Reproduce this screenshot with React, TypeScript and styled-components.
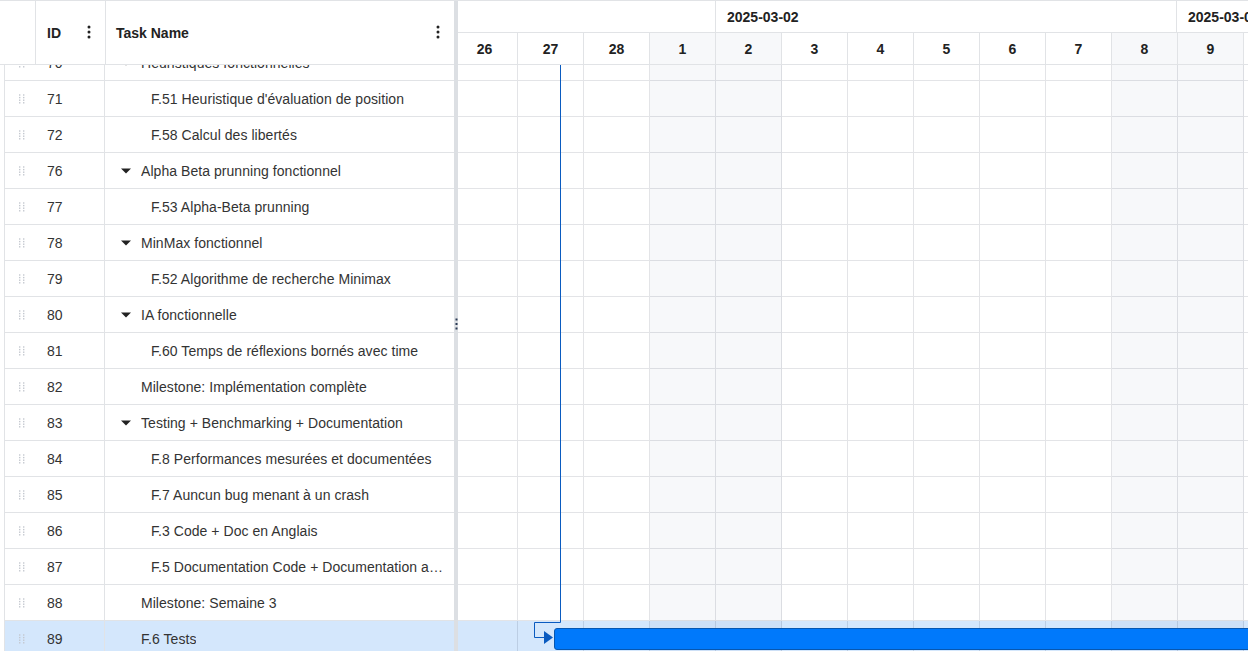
import React from "react";
import styled, { createGlobalStyle, css } from "styled-components";

const GlobalStyle = createGlobalStyle`
  html, body { margin: 0; padding: 0; background: #fff; }
  body { font-family: "Liberation Sans", Arial, sans-serif; font-size: 14px; color: #333; }
  * { box-sizing: border-box; }
`;

const LINE = "#e1e3e6";
const ROW_H = 36;
const COL_W = 66;

type Task = { id: number; name: string; kind: "parent" | "child" | "leaf"; selected?: boolean };

const tasks: Task[] = [
  { id: 70, name: "Heuristiques fonctionnelles", kind: "parent" },
  { id: 71, name: "F.51 Heuristique d'évaluation de position", kind: "child" },
  { id: 72, name: "F.58 Calcul des libertés", kind: "child" },
  { id: 76, name: "Alpha Beta prunning fonctionnel", kind: "parent" },
  { id: 77, name: "F.53 Alpha-Beta prunning", kind: "child" },
  { id: 78, name: "MinMax fonctionnel", kind: "parent" },
  { id: 79, name: "F.52 Algorithme de recherche Minimax", kind: "child" },
  { id: 80, name: "IA fonctionnelle", kind: "parent" },
  { id: 81, name: "F.60 Temps de réflexions bornés avec time", kind: "child" },
  { id: 82, name: "Milestone: Implémentation complète", kind: "leaf" },
  { id: 83, name: "Testing + Benchmarking + Documentation", kind: "parent" },
  { id: 84, name: "F.8 Performances mesurées et documentées", kind: "child" },
  { id: 85, name: "F.7 Auncun bug menant à un crash", kind: "child" },
  { id: 86, name: "F.3 Code + Doc en Anglais", kind: "child" },
  { id: 87, name: "F.5 Documentation Code + Documentation architecture", kind: "child" },
  { id: 88, name: "Milestone: Semaine 3", kind: "leaf" },
  { id: 89, name: "F.6 Tests", kind: "leaf", selected: true },
];

const days = [
  { d: 26, we: false },
  { d: 27, we: false },
  { d: 28, we: false },
  { d: 1, we: true },
  { d: 2, we: true },
  { d: 3, we: false },
  { d: 4, we: false },
  { d: 5, we: false },
  { d: 6, we: false },
  { d: 7, we: false },
  { d: 8, we: true },
  { d: 9, we: true },
  { d: 10, we: false },
];

const weeks = [
  { label: "", span: 4 },
  { label: "2025-03-02", span: 7 },
  { label: "2025-03-09", span: 7 },
];

/* ---------- layout ---------- */

const Gantt = styled.div`
  display: flex;
  width: 1248px;
  height: 651px;
  overflow: hidden;
  border-top: 1px solid ${LINE};
`;

const GridPanel = styled.div`
  width: 454px;
  flex: none;
  display: flex;
  flex-direction: column;
  overflow: hidden;
`;

const Splitter = styled.div`
  width: 4px;
  flex: none;
  background: #dcdfe3;
  display: flex;
  align-items: center;
  justify-content: center;
  padding-bottom: 4px;
`;

const ChartPanel = styled.div`
  flex: 1;
  min-width: 0;
  display: flex;
  flex-direction: column;
  overflow: hidden;
`;

/* ---------- grid header ---------- */

const GridHeader = styled.div`
  height: 64px;
  flex: none;
  display: flex;
  border-bottom: 1px solid ${LINE};
`;

const HeadCell = styled.div<{ $w?: number; $divider?: boolean; $pad?: number }>`
  ${(p) => (p.$w ? css`width: ${p.$w}px; flex: none;` : css`flex: 1; min-width: 0;`)}
  display: flex;
  align-items: center;
  justify-content: space-between;
  padding: 0 10px 0 ${(p) => p.$pad ?? 11}px;
  font-weight: bold;
  font-size: 14px;
  color: #222;
  ${(p) => p.$divider && css`border-right: 1px solid ${LINE};`}
`;

const MenuButton = styled.span`
  display: flex;
  width: 12px;
  justify-content: center;
  color: #222;
  margin-top: -2px;
`;

/* ---------- grid body ---------- */

const Viewport = styled.div`
  flex: 1;
  overflow: hidden;
`;

const GridRows = styled.div`
  margin: -20px 0 0 4px;
  border-left: 1px solid ${LINE};
`;

const GridRow = styled.div<{ $selected?: boolean }>`
  height: ${ROW_H}px;
  display: flex;
  align-items: stretch;
  border-bottom: 1px solid ${LINE};
  background: ${(p) => (p.$selected ? "#d4e7fc" : "#fff")};
`;

const DragCell = styled.div`
  width: 30px;
  flex: none;
  display: flex;
  align-items: center;
  padding-left: 14px;
`;

const IdCell = styled.div`
  width: 70px;
  flex: none;
  display: flex;
  align-items: center;
  padding-left: 12px;
  border-right: 1px solid ${LINE};
`;

const NameCell = styled.div<{ $indent: number }>`
  flex: 1;
  min-width: 0;
  display: flex;
  align-items: center;
  padding: 0 10px 0 ${(p) => p.$indent}px;
`;

const Toggle = styled.span`
  width: 25px;
  flex: none;
  display: flex;
  align-items: center;
  padding-left: 5px;
`;

const NameText = styled.span`
  white-space: nowrap;
  overflow: hidden;
  text-overflow: ellipsis;
  letter-spacing: 0.05px;
`;

/* ---------- chart header ---------- */

const ChartHeader = styled.div`
  height: 64px;
  flex: none;
  overflow: hidden;
`;

const TierRow = styled.div`
  display: flex;
  height: 32px;
  margin-left: -6px;
  border-bottom: 1px solid ${LINE};
`;

const WeekCell = styled.div<{ $span: number; $first?: boolean }>`
  width: ${(p) => p.$span * COL_W}px;
  flex: none;
  display: flex;
  align-items: center;
  padding-left: 11px;
  font-weight: bold;
  color: #222;
  ${(p) => !p.$first && css`border-left: 1px solid ${LINE};`}
  margin-left: ${(p) => (p.$first ? 0 : -1)}px;
`;

const DayCell = styled.div<{ $we: boolean }>`
  width: ${COL_W}px;
  flex: none;
  display: flex;
  align-items: center;
  justify-content: center;
  font-weight: bold;
  color: #222;
  border-right: 1px solid ${LINE};
  background: ${(p) => (p.$we ? "#f7f8fa" : "transparent")};
`;

/* ---------- chart body ---------- */

const ChartRows = styled.div`
  position: relative;
  margin: -20px 0 0 -6px;
`;

const ChartRow = styled.div<{ $selected?: boolean }>`
  height: ${ROW_H}px;
  display: flex;
  background: ${(p) => (p.$selected ? "#d4e7fc" : "#fff")};
`;

const ChartCell = styled.div<{ $we: boolean }>`
  width: ${COL_W}px;
  flex: none;
  border-right: 1px solid rgba(0, 10, 40, 0.11);
  border-bottom: 1px solid rgba(0, 10, 40, 0.11);
  background: ${(p) => (p.$we ? "rgba(55, 80, 130, 0.04)" : "transparent")};
`;

const LinkLayer = styled.svg`
  position: absolute;
  left: 0;
  top: 0;
  overflow: visible;
  pointer-events: none;
`;

const TaskBar = styled.div`
  position: absolute;
  left: 102px;
  top: 583px;
  width: 900px;
  height: 22px;
  background: #0079fb;
  border: 1px solid #0757b0;
  border-radius: 3px;
`;

/* ---------- icons ---------- */

const Kebab = ({ color = "#222" }: { color?: string }) => (
  <svg width="4" height="14" viewBox="0 0 4 14">
    <circle cx="2" cy="2" r="1.5" fill={color} />
    <circle cx="2" cy="7" r="1.5" fill={color} />
    <circle cx="2" cy="12" r="1.5" fill={color} />
  </svg>
);

const SplitKebab = () => (
  <svg width="3" height="12" viewBox="0 0 3 12">
    <rect x="0.5" y="0.5" width="2" height="2" fill="#2a3a55" />
    <rect x="0.5" y="5" width="2" height="2" fill="#2a3a55" />
    <rect x="0.5" y="9.5" width="2" height="2" fill="#2a3a55" />
  </svg>
);

const DragDots = () => (
  <svg width="6" height="10" viewBox="0 0 6 10">
    {[0, 1].map((c) =>
      [0, 1, 2, 3].map((r) => (
        <rect key={`${c}-${r}`} x={c * 4} y={r * 2.6 + 0.3} width="1.4" height="1.4" fill="#c4c8cf" />
      ))
    )}
  </svg>
);

const Caret = () => (
  <svg width="10" height="6" viewBox="0 0 10 6">
    <path d="M0 0.5 L10 0.5 L5 5.5 Z" fill="#222" />
  </svg>
);

export default function App() {
  return (
    <>
      <GlobalStyle />
      <Gantt>
        <GridPanel>
          <GridHeader>
            <HeadCell $w={36} $divider />
            <HeadCell $w={70} $divider>
              ID
              <MenuButton>
                <Kebab />
              </MenuButton>
            </HeadCell>
            <HeadCell $pad={10}>
              Task Name
              <MenuButton>
                <Kebab />
              </MenuButton>
            </HeadCell>
          </GridHeader>
          <Viewport>
            <GridRows>
              {tasks.map((t) => (
                <GridRow key={t.id} $selected={t.selected}>
                  <DragCell>
                    <DragDots />
                  </DragCell>
                  <IdCell>{t.id}</IdCell>
                  <NameCell $indent={t.kind === "child" ? 46 : 11}>
                    {t.kind === "parent" && (
                      <Toggle>
                        <Caret />
                      </Toggle>
                    )}
                    {t.kind === "leaf" && <Toggle />}
                    <NameText>{t.name}</NameText>
                  </NameCell>
                </GridRow>
              ))}
            </GridRows>
          </Viewport>
        </GridPanel>
        <Splitter>
          <SplitKebab />
        </Splitter>
        <ChartPanel>
          <ChartHeader>
            <TierRow>
              {weeks.map((w, i) => (
                <WeekCell key={i} $span={w.span} $first={i === 0}>
                  {w.label}
                </WeekCell>
              ))}
            </TierRow>
            <TierRow>
              {days.map((d, i) => (
                <DayCell key={i} $we={d.we}>
                  {d.d}
                </DayCell>
              ))}
            </TierRow>
          </ChartHeader>
          <Viewport>
            <ChartRows>
              {tasks.map((t) => (
                <ChartRow key={t.id} $selected={t.selected}>
                  {days.map((d, i) => (
                    <ChartCell key={i} $we={d.we} />
                  ))}
                </ChartRow>
              ))}
              <LinkLayer width="1" height="1">
                <polyline
                  points="108.5,0 108.5,577.5 82.5,577.5 82.5,592.5 93,592.5"
                  fill="none"
                  stroke="#0a5bc0"
                  strokeWidth="1"
                />
                <path d="M92 586 L101 592.5 L92 599 Z" fill="#0a5bc0" />
              </LinkLayer>
              <TaskBar />
            </ChartRows>
          </Viewport>
        </ChartPanel>
      </Gantt>
    </>
  );
}
